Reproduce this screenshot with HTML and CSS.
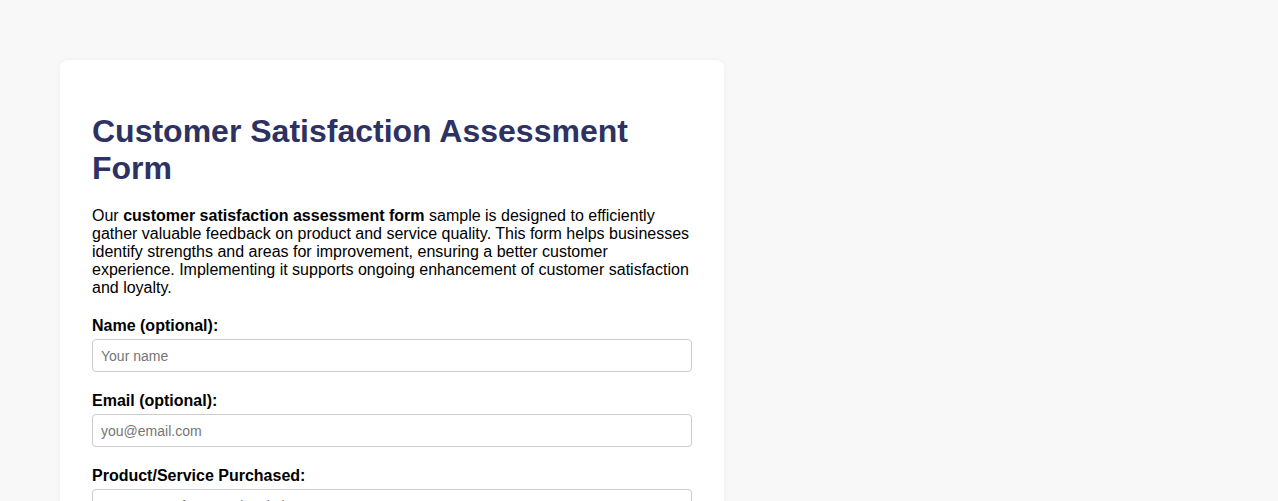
FILE: index.html
```html
<!DOCTYPE html>
<html lang="en">
<head>
<meta charset="utf-8">
<title>Customer Satisfaction Assessment Form</title>
<link rel="stylesheet" href="styles.css">
</head>
<body>
<div class="card">
  <h1 class="title">Customer Satisfaction Assessment Form</h1>
  <p class="intro">Our <strong>customer satisfaction assessment form</strong> sample is designed to efficiently gather valuable feedback on product and service quality. This form helps businesses identify strengths and areas for improvement, ensuring a better customer experience. Implementing it supports ongoing enhancement of customer satisfaction and loyalty.</p>
  <form class="form">
    <div class="group">
      <label class="label" for="name">Name (optional):</label>
      <input class="input" id="name" type="text" placeholder="Your name">
    </div>
    <div class="group">
      <label class="label" for="email">Email (optional):</label>
      <input class="input" id="email" type="email" placeholder="you@email.com">
    </div>
    <div class="group">
      <label class="label" for="product">Product/Service Purchased:</label>
      <input class="input" id="product" type="text" placeholder="e.g., ABC Software Subscription">
    </div>
  </form>
</div>
</body>
</html>
```

FILE: styles.css
```css
html, body {
  margin: 0;
  padding: 0;
}
body {
  background: #f8f8f8;
  font-family: "Liberation Sans", Arial, sans-serif;
  color: #000;
  padding: 60px;
}
.card {
  width: 600px;
  background: #fff;
  border-radius: 8px;
  padding: 32px;
  box-shadow: 0 0 4px rgba(0, 0, 0, 0.05);
}
.title {
  font-size: 32px;
  font-weight: bold;
  color: #2d3262;
  margin: 21px 0 20px;
  line-height: 37px;
}
.intro {
  font-size: 16px;
  line-height: 18px;
  margin: 20px 0;
}
.form {
  display: flex;
  flex-direction: column;
  gap: 20px;
}
.group {
  display: flex;
  flex-direction: column;
  gap: 4px;
}
.label {
  font-weight: bold;
  font-size: 16px;
  line-height: 18px;
}
.input {
  box-sizing: border-box;
  width: 100%;
  height: 33px;
  padding: 0 8px;
  border: 1px solid #ccc;
  border-radius: 4px;
  font-family: "Liberation Sans", Arial, sans-serif;
  font-size: 14px;
  color: #000;
  background: #fff;
}
.input::placeholder {
  color: #757575;
}
```
